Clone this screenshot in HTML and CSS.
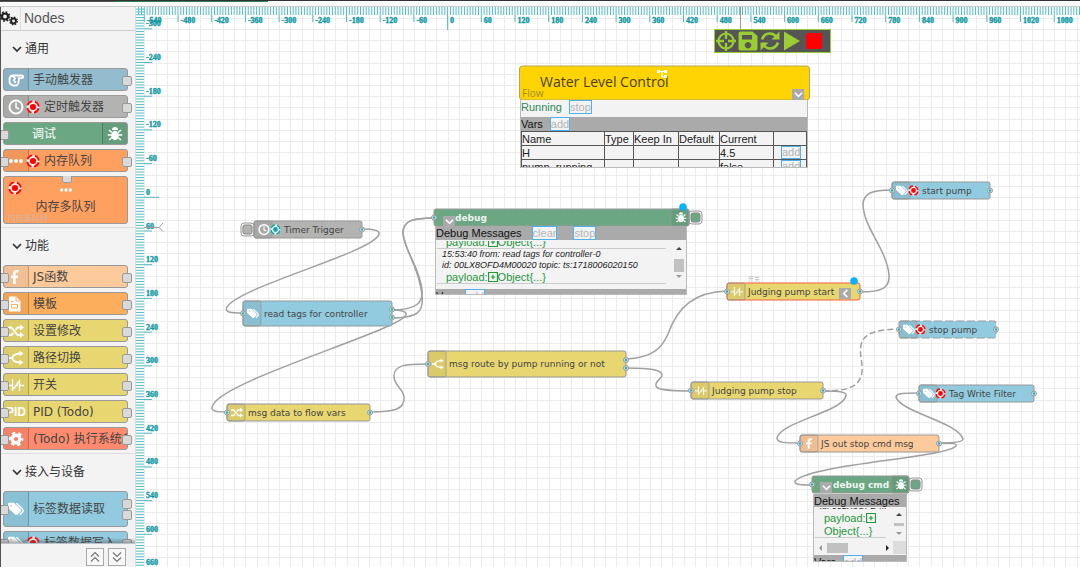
FILE: index.html
```html
<!DOCTYPE html>
<html lang="zh">
<head>
    <meta charset="UTF-8">
    <meta name="viewport" content="width=device-width, initial-scale=1.0">
    <title>Flow Editor</title>
    <link rel="stylesheet" href="styles.css">
</head>
<body>

    <svg class="defs" aria-hidden="true">
        <symbol id="i-cogs" viewBox="0 0 20 16">
            <circle cx="5" cy="5.5" r="3" fill="none" stroke="currentColor" stroke-width="2.2"/>
            <circle cx="5" cy="5.5" r="4.6" fill="none" stroke="currentColor" stroke-width="1.6" stroke-dasharray="1.8 1.81"/>
            <circle cx="13.5" cy="10" r="2.4" fill="none" stroke="currentColor" stroke-width="2"/>
            <circle cx="13.5" cy="10" r="3.8" fill="none" stroke="currentColor" stroke-width="1.4" stroke-dasharray="1.5 1.48"/>
        </symbol>
        <symbol id="i-hand" viewBox="0 0 16 16">
            <path d="M4.5 3.5h9.3a1.2 1.2 0 0 1 0 2.6H9.8M11 6.1v1.6q0 1-1 1.2M10.5 9v1.5q0 1-1 1.2M9.5 12q0 1.5-1.6 1.5H5.5Q1.500 13 1.5 8.5T4.5 3.5L7 6.500 5.5 9M6 9.500l2 1" fill="none" stroke="currentColor" stroke-width="1.9" stroke-linejoin="round"/>
        </symbol>
        <symbol id="i-clock" viewBox="0 0 16 16">
            <circle cx="8" cy="8" r="6.5" fill="none" stroke="currentColor" stroke-width="2"/>
            <path d="M8 3.500V8.500l3 1.5" fill="none" stroke="currentColor" stroke-width="1.5"/>
        </symbol>
        <symbol id="i-target" viewBox="0 0 16 16">
            <circle cx="8" cy="8" r="6.5" fill="#fff" fill-opacity=".8" stroke="#fff" stroke-opacity=".6" stroke-width="2"/>
            <circle cx="8" cy="8" r="6.5" fill="none" stroke="currentColor" stroke-width="2" stroke-dasharray="7.2 3.01" stroke-dashoffset="-1.5"/>
            <circle cx="8" cy="8" r="3.5" fill="currentColor"/>
        </symbol>
        <symbol id="i-bug" viewBox="0 0 16 16">
            <path d="M5 4a3 3 0 0 1 6 0z" fill="currentColor"/>
            <ellipse cx="8" cy="9.5" rx="3.8" ry="4.7" fill="currentColor"/>
            <path d="M2 4l3 2.5M14 4l-3 2.5M.8 9h4M15.2 9h-4M2 14l3-2.5M14 14l-3-2.5" stroke="currentColor" stroke-width="1.5"/>
        </symbol>
        <symbol id="i-dots" viewBox="0 0 16 16">
            <circle cx="3" cy="8" r="1.9" fill="currentColor"/>
            <circle cx="8" cy="8" r="1.9" fill="currentColor"/>
            <circle cx="13" cy="8" r="1.9" fill="currentColor"/>
        </symbol>
        <symbol id="i-func" viewBox="0 0 16 16">
            <path d="M10.500 2.300H8.500Q6.300 2.300 6.300 4.500V15M3 7.800h7" fill="none" stroke="currentColor" stroke-width="2.6"/>
        </symbol>
        <symbol id="i-file" viewBox="0 0 16 16">
            <path d="M1 .5h7L12.500 5V15.500H1z" fill="currentColor"/>
            <path d="M8 .5v4.500h4.500M3 5.500h2.500M3.500 8.500h6v3.500h-6z" fill="none" stroke="#fdae5c"/>
        </symbol>
        <symbol id="i-shuffle" viewBox="0 0 16 16">
            <path d="M0 4.500h3.500L9.500 12H13M0 12h3.500l1.800-2.200M7.600 6.800l1.900-2.300H13" fill="none" stroke="currentColor" stroke-width="2"/>
            <path d="M12 1.500l4 3-4 3zM12 9l4 3-4 3z" fill="currentColor"/>
        </symbol>
        <symbol id="i-route" viewBox="0 0 16 16">
            <path d="M0 8h4.500M13 3.500H11Q4.500 4.500 4.500 8T11 12.500h2" fill="none" stroke="currentColor" stroke-width="1.8"/>
            <path d="M11.500.8l4 2.700-4 2.700zM11.500 9.800l4 2.700-4 2.700z" fill="currentColor"/>
        </symbol>
        <symbol id="i-switch" viewBox="0 0 16 16">
            <path d="M0 8.500h4.500M4.500 2v12M5.500 12L12 3M11.500 4v10M11.500 8.500H16M8 8.500h2" fill="none" stroke="currentColor" stroke-width="1.3"/>
        </symbol>
        <symbol id="i-gear" viewBox="0 0 16 16">
            <circle cx="8" cy="8" r="3.8" fill="none" stroke="currentColor" stroke-width="3.4"/>
            <circle cx="8" cy="8" r="6.3" fill="none" stroke="currentColor" stroke-width="2.2" stroke-dasharray="3.3 3.3" stroke-dashoffset="1.6"/>
        </symbol>
        <symbol id="i-tags" viewBox="0 0 16 16">
            <path d="M0 3Q0 1.800 1.200 1.800H6L12.500 8.300Q13.500 9.500 12.500 10.500L9.500 13.600Q8.300 14.600 7.200 13.600L0 7z" fill="currentColor"/>
            <path d="M8.500 2.200L14.500 8.300Q15.700 9.600 14.500 10.900L11.800 13.800" fill="none" stroke="currentColor" stroke-width="1.5"/>
            <circle cx="3" cy="4.7" r=".8" fill="#8bb8c8"/>
        </symbol>
        <symbol id="i-caret" viewBox="0 0 10 10">
            <path d="M1 3l4 4 4-4" fill="none" stroke="currentColor" stroke-width="1.7"/>
        </symbol>
        <symbol id="i-up2" viewBox="0 0 12 12">
            <path d="M2 5.500l4-4 4 4M2 10.500l4-4 4 4" fill="none" stroke="currentColor" stroke-width="1.2"/>
        </symbol>
        <symbol id="i-down2" viewBox="0 0 12 12">
            <path d="M2 1.500l4 4 4-4M2 6.500l4 4 4-4" fill="none" stroke="currentColor" stroke-width="1.2"/>
        </symbol>
        <symbol id="i-crosshair" viewBox="0 0 20 20">
            <circle cx="10" cy="10" r="7.5" fill="none" stroke="currentColor" stroke-width="2.2"/>
            <path d="M10 0v8M10 12v8M0 10h8M12 10h8" stroke="currentColor" stroke-width="2.4"/>
        </symbol>
        <symbol id="i-save" viewBox="0 0 20 20">
            <path fill-rule="evenodd" d="M2.500.5h12L19.500 5v12.500q0 2-2 2h-15q-2 0-2-2v-15q0-2 2-2zM4 4v4.500h10V4zM10 11a3.200 3.200 0 1 0 .01 0z" fill="currentColor"/>
        </symbol>
        <symbol id="i-refresh" viewBox="0 0 20 20">
            <path d="M2 8.500Q4 2.500 10 2.500 13.500 2.500 16 5.500M18 11.500Q16 17.500 10 17.500 6.500 17.500 4 14.500" fill="none" stroke="currentColor" stroke-width="2.6"/>
            <path d="M19.500.5v8h-8zM.5 19.500v-8h8z" fill="currentColor"/>
        </symbol>
        <symbol id="i-play" viewBox="0 0 20 20">
            <path d="M2 .5L18 10 2 19.500z" fill="currentColor"/>
        </symbol>
        <symbol id="i-stop" viewBox="0 0 20 20">
            <rect x="2" y="2" width="16" height="16" rx="2" fill="red"/>
        </symbol>
        <symbol id="i-plus" viewBox="0 0 9 9">
            <path d="M.5.5h8v8h-8zM2.500 4.500h4M4.500 2.500v4" fill="none" stroke="currentColor"/>
        </symbol>
    </svg>

    <div class="topbar"><div class="tab-line"></div></div>

    <div class="editor">
        <aside class="sidebar">
            <header class="sidebar-head">
                <svg class="cogs"><use href="#i-cogs"/></svg>
                <h1>Nodes</h1>
            </header>

            <div class="palette">
                <section class="category">
                    <h2><svg><use href="#i-caret"/></svg>通用</h2>
                    <div class="pnode steel out">
                        <span class="picon"><svg><use href="#i-hand"/></svg></span>
                        <span class="plabel">手动触发器</span>
                    </div>
                    <div class="pnode gray out">
                        <span class="picon"><svg><use href="#i-clock"/></svg></span>
                        <svg class="mark"><use href="#i-target"/></svg>
                        <span class="plabel">定时触发器</span>
                    </div>
                    <div class="pnode green in">
                        <span class="plabel">调试</span>
                        <span class="picon at-end"><svg><use href="#i-bug"/></svg></span>
                    </div>
                    <div class="pnode orange in out">
                        <span class="picon"><svg><use href="#i-dots"/></svg></span>
                        <svg class="mark"><use href="#i-target"/></svg>
                        <span class="plabel">内存队列</span>
                    </div>
                    <div class="pnode orange multi">
                        <svg class="mark"><use href="#i-target"/></svg>
                        <svg class="dots"><use href="#i-dots"/></svg>
                        <span class="plabel">内存多队列</span>
                        <span class="type">内存多队列</span>
                    </div>
                </section>

                <section class="category">
                    <h2><svg><use href="#i-caret"/></svg>功能</h2>
                    <div class="pnode peach in out">
                        <span class="picon"><svg><use href="#i-func"/></svg></span>
                        <span class="plabel">JS函数</span>
                    </div>
                    <div class="pnode amber in out">
                        <span class="picon"><svg><use href="#i-file"/></svg></span>
                        <span class="plabel">模板</span>
                    </div>
                    <div class="pnode yellow in out">
                        <span class="picon"><svg><use href="#i-shuffle"/></svg></span>
                        <span class="plabel">设置修改</span>
                    </div>
                    <div class="pnode yellow in out">
                        <span class="picon"><svg><use href="#i-route"/></svg></span>
                        <span class="plabel">路径切换</span>
                    </div>
                    <div class="pnode yellow in out">
                        <span class="picon"><svg><use href="#i-switch"/></svg></span>
                        <span class="plabel">开关</span>
                    </div>
                    <div class="pnode yellow in out">
                        <span class="picon pid">PID</span>
                        <span class="plabel">PID (Todo)</span>
                    </div>
                    <div class="pnode red in out">
                        <span class="picon"><svg><use href="#i-gear"/></svg></span>
                        <span class="plabel">(Todo) 执行系统命令</span>
                    </div>
                </section>

                <section class="category">
                    <h2><svg><use href="#i-caret"/></svg>接入与设备</h2>
                    <div class="pnode sky tall in out2">
                        <span class="picon"><svg><use href="#i-tags"/></svg></span>
                        <span class="plabel">标签数据读取</span>
                    </div>
                    <div class="pnode sky in out">
                        <span class="picon"><svg><use href="#i-tags"/></svg></span>
                        <svg class="mark"><use href="#i-target"/></svg>
                        <span class="plabel">标签数据写入</span>
                    </div>
                </section>
            </div>

            <footer class="sidebar-foot">
                <button type="button" aria-label="Collapse all"><svg><use href="#i-up2"/></svg></button>
                <button type="button" aria-label="Expand all"><svg><use href="#i-down2"/></svg></button>
            </footer>
        </aside>

        <main class="workspace">
            <svg class="canvas" id="canvas">
                <g id="grid"></g>
                <g id="rulers"></g>
                <g id="wires"></g>
                <g id="nodes"></g>
            </svg>

            <div class="toolbar">
                <button type="button" aria-label="Center"><svg><use href="#i-crosshair"/></svg></button>
                <button type="button" aria-label="Save"><svg><use href="#i-save"/></svg></button>
                <button type="button" aria-label="Reload"><svg><use href="#i-refresh"/></svg></button>
                <button type="button" aria-label="Run"><svg><use href="#i-play"/></svg></button>
                <button type="button" aria-label="Stop"><svg><use href="#i-stop"/></svg></button>
            </div>

            <div class="panel flow-panel">
                <div class="status">Running <button type="button" class="link">stop</button></div>
                <div class="bar">Vars <button type="button" class="link">add</button></div>
                <table>
                    <tr><th class="c-name">Name</th><th class="c-type">Type</th><th class="c-keep">Keep In</th><th class="c-def">Default</th><th class="c-cur">Current</th><th></th></tr>
                    <tr><td>H</td><td></td><td></td><td></td><td>4.5</td><td class="act"><button type="button" class="link">add</button></td></tr>
                    <tr><td>pump_running</td><td></td><td></td><td></td><td>false</td><td class="act"><button type="button" class="link">add</button></td></tr>
                </table>
            </div>

            <div class="panel debug-panel">
                <div class="bar">Debug Messages <button type="button" class="link">clear</button> <button type="button" class="link far">stop</button></div>
                <div class="scroll">
                    <div class="messages">
                        <p class="payload">payload:<svg><use href="#i-plus"/></svg>Object{...}</p>
                        <p class="meta">15:53:40 from: read tags for controller-0</p>
                        <p class="meta">id: 00LX8OFD4M00020 topic: ts:1718006020150</p>
                        <p class="payload">payload:<svg><use href="#i-plus"/></svg>Object{...}</p>
                    </div>
                    <div class="vscroll"><i class="up"></i><i class="thumb"></i><i class="down"></i></div>
                </div>
                <div class="bar">Vars <button type="button" class="link">add</button></div>
            </div>

            <div class="panel cmd-panel">
                <div class="bar">Debug Messages</div>
                <div class="scroll">
                    <div class="messages">
                        <p class="meta">id: 00LX8OFD4M0002</p>
                        <p class="payload">payload:<svg><use href="#i-plus"/></svg><br>Object{...}</p>
                    </div>
                    <div class="vscroll"><i class="up"></i><i class="thumb"></i><i class="down"></i></div>
                </div>
                <div class="hscroll"><i class="left"></i><i class="thumb"></i><i class="right"></i></div>
                <div class="bar">Vars <button type="button" class="link">add</button></div>
            </div>

            <button type="button" class="fold fold-flow" aria-label="Fold flow"><svg><use href="#i-caret"/></svg></button>
            <button type="button" class="fold fold-debug" aria-label="Fold debug"><svg><use href="#i-caret"/></svg></button>
            <button type="button" class="fold fold-cmd" aria-label="Fold debug cmd"><svg><use href="#i-caret"/></svg></button>
            <button type="button" class="fold fold-judge" aria-label="Unfold judging"><svg><use href="#i-caret"/></svg></button>
        </main>
    </div>

    <script src="script.js"></script>
</body>
</html>
```

FILE: styles.css
```css
* {
    box-sizing: border-box;
}
body {
    margin: 0;
    height: 100vh;
    display: flex;
    flex-direction: column;
    overflow: hidden;
    background: #fff;
    font-family: "Liberation Sans", "Noto Sans CJK SC", sans-serif;
    font-size: 11px;
    color: #222;
}
h1, h2, p {
    margin: 0;
    font-weight: normal;
}
button {
    font: inherit;
    padding: 0;
    cursor: pointer;
}
svg {
    display: block;
    flex: none;
}
.defs {
    position: absolute;
    width: 0;
    height: 0;
}
.topbar {
    height: 7px;
    flex: none;
    border-top: 1px solid #333;
    border-bottom: 1px solid #ccc;
    background: #fafafa;
}
.tab-line {
    width: 268px;
    height: 1px;
    background: linear-gradient(90deg, #555 115px, #2f7d55 115px);
}
.editor {
    flex: 1;
    min-height: 0;
    display: flex;
}

/* palette */
.sidebar {
    width: 136px;
    flex: none;
    display: flex;
    flex-direction: column;
    background: #f3f3f3;
    border-left: 1px solid #555;
    border-right: 1px solid #ddd;
}
.sidebar-head {
    height: 24px;
    flex: none;
    display: flex;
    align-items: center;
    border-bottom: 1px solid #ccc;
}
.cogs {
    width: 20px;
    height: 16px;
    margin-left: -1px;
    color: #222;
}
.sidebar-head h1 {
    font-size: 14px;
    line-height: 23px;
    padding-left: 3px;
    border-left: 1px solid #ddd;
    color: #555;
}
.palette {
    flex: 1;
    min-height: 0;
    overflow: hidden;
    position: relative;
}
/* fade at the lower edge of the scrolled list */
.palette::after {
    content: "";
    position: absolute;
    left: 0;
    right: 0;
    bottom: 0;
    height: 5px;
    background: linear-gradient(rgba(90, 90, 90, 0), rgba(90, 90, 90, .5));
}
.category {
    display: flex;
    flex-direction: column;
    gap: 5px;
    padding: 0 7px 4px 2px;
    border-bottom: 1px solid #ddd;
}
.category h2 {
    height: 36px;
    margin-bottom: -4px;
    padding-left: 9px;
    display: flex;
    align-items: center;
    gap: 3px;
    font-size: 12px;
    line-height: 36px;
    color: #333;
}
.category h2 svg {
    width: 10px;
    height: 10px;
}
.pnode {
    position: relative;
    height: 23px;
    margin-bottom: -1px;
    display: flex;
    align-items: center;
    border: 1px solid #999;
    border-radius: 3px;
    white-space: nowrap;
    font-family: "DejaVu Sans", "Noto Sans CJK SC", sans-serif;
    font-size: 12px;
    color: #444;
}
.picon {
    width: 25px;
    align-self: stretch;
    flex: none;
    display: flex;
    align-items: center;
    justify-content: center;
    background: rgba(0, 0, 0, .05);
    border-right: 1px solid rgba(0, 0, 0, .2);
    color: #fff;
}
.picon svg {
    width: 16px;
    height: 16px;
}
.picon.at-end {
    border-right: 0;
    border-left: 1px solid rgba(0, 0, 0, .2);
}
.pid {
    font-size: 12px;
    font-weight: bold;
    font-family: "Liberation Sans", sans-serif;
}
.mark {
    width: 14px;
    height: 14px;
    margin: 0 0 0 -3px;
    color: red;
}
.plabel {
    flex: 1;
    min-width: 0;
    overflow: hidden;
    padding-left: 4px;
    line-height: 20px;
}
.green .plabel {
    padding-left: 28px;
    color: #fff;
}
.steel { background: #93bccf; }
.gray { background: #b3b3b1; }
.green { background: #6ba783; }
.orange { background: #ffa060; }
.peach { background: #fdca9c; }
.amber { background: #fdae5c; }
.yellow { background: #e8d770; }
.red { background: #ff8a6e; }
.sky { background: #92cbdf; }
.tall {
    height: 36px;
}
.multi {
    height: 48px;
    display: block;
    text-align: center;
}
.multi .plabel {
    display: block;
    padding: 0;
}
.multi .mark {
    position: absolute;
    left: 7px;
    top: 4px;
}
.dots {
    width: 14px;
    height: 14px;
    margin: 6px auto 0;
    color: #fff;
}
.type {
    position: absolute;
    left: 4px;
    bottom: 0;
    font-size: 8px;
    line-height: 8px;
    color: #cdb8a8;
}
.in::before, .out::after, .out2::after, .multi::before {
    content: "";
    position: absolute;
    width: 8px;
    height: 8px;
    top: 7px;
    background: #d9d9d9;
    border: 1px solid #999;
    border-radius: 2px;
}
.in::before {
    left: -5px;
}
.out::after, .out2::after {
    right: -5px;
}
.tall::before {
    top: 13px;
}
.out2::after {
    top: 7px;
    box-shadow: 0 11px 0 -1px #d9d9d9, 0 11px 0 0 #999;
}
.multi::before {
    left: 58px;
    top: -4px;
    clip-path: inset(3px 0 0 0);
}
.sidebar-foot {
    height: 24px;
    flex: none;
    display: flex;
    gap: 4px;
    justify-content: flex-end;
    align-items: flex-end;
    padding: 0 9px 1px 0;
    border-top: 1px solid #b8c4cc;
}
.sidebar-foot button {
    width: 18px;
    height: 18px;
    display: grid;
    place-items: center;
    background: #f8f8f8;
    border: 1px solid #aaa;
    color: #777;
}
.sidebar-foot svg {
    width: 12px;
    height: 12px;
}

/* canvas */
.workspace {
    position: relative;
    flex: 1;
    min-width: 0;
    overflow: hidden;
}
.canvas {
    width: 100%;
    height: 100%;
}
.grid-line {
    stroke: #ececec;
}
.tick {
    stroke: #52bcc6;
}
.ruler-label {
    font: bold 8px "Liberation Serif", serif;
    fill: #129aa5;
    stroke: #129aa5;
    stroke-width: .4;
}
.cursor {
    stroke: #999;
    fill: none;
}
.wire {
    fill: none;
    stroke: #a0a0a0;
    stroke-width: 1.5;
}
.dashed {
    stroke-dasharray: 6 3;
}
.node-box {
    stroke: #999;
}
.node-box.dashed {
    stroke-dasharray: 8 3;
}
.node-box.selected {
    stroke: #ff5f3c;
}
.icon-box {
    fill: #000;
    fill-opacity: .06;
    stroke: #999;
    stroke-opacity: .8;
}
.node-icon {
    color: #fff;
}
.mark-red { color: red; }
.mark-teal { color: #12a5b0; }
.node-label {
    font-family: "DejaVu Sans", sans-serif;
    font-size: 9px;
    fill: #444;
}
.node-label.light {
    font-weight: bold;
    fill: #eef6f0;
}
.flow-title {
    font-family: "Open Sans", sans-serif;
    font-size: 14px;
    fill: #4a3f10;
}
.flow-type {
    font-family: "Open Sans", sans-serif;
    font-size: 10px;
    fill: #a08a30;
}
.hint {
    font-family: "Noto Sans CJK SC", sans-serif;
    font-size: 6px;
    fill: #bbb;
}
.port {
    fill: #d5e6e8;
    stroke: #999;
}
.port-dot {
    fill: #2fa9b4;
}
.changed {
    fill: #00b7ff;
    stroke: #0a9ad8;
    stroke-width: .5;
}

.toolbar {
    position: absolute;
    left: 578px;
    top: 22px;
    height: 24px;
    padding: 0 6px 0 1px;
    display: flex;
    align-items: center;
    gap: 2px;
    background: #555;
    border: 1px solid #9acd32;
}
.toolbar button {
    border: 0;
    background: none;
    color: #9acd32;
}
.toolbar svg {
    width: 20px;
    height: 20px;
}

/* panels under the nodes */
.panel {
    position: absolute;
    overflow: hidden;
    background: #f3f3f3;
    border: 1px solid #bbb;
    border-top: 0;
}
.flow-panel {
    left: 384px;
    top: 93px;
    width: 288px;
    height: 68px;
}
.debug-panel {
    left: 299px;
    top: 219px;
    width: 252px;
    height: 69px;
}
.cmd-panel {
    left: 677px;
    top: 487px;
    width: 94px;
    height: 68px;
}
.status, .bar {
    display: flex;
    align-items: center;
    gap: 7px;
    white-space: nowrap;
}
.status {
    height: 14px;
    margin-bottom: 3px;
    color: #2e8b57;
}
.bar {
    height: 14px;
    background: #aaa;
    color: #111;
}
.debug-panel .bar:first-child {
    gap: 10px;
}
.debug-panel .far {
    margin-left: 6px;
}
.link {
    border: 1px solid #4db2ea;
    background: #f3f3f3;
    color: #b5b5b5;
    line-height: 12px;
}
table {
    width: 100%;
    table-layout: fixed;
    border-collapse: collapse;
    font-size: 11px;
}
th, td {
    height: 14px;
    padding: 0;
    border: 1px solid #555;
    font-weight: normal;
    text-align: left;
    line-height: 12px;
    white-space: nowrap;
}
.c-name { width: 83px; }
.c-type { width: 29px; }
.c-keep { width: 45px; }
.c-def { width: 41px; }
.c-cur { width: 54px; }
.act {
    padding-left: 7px;
}
.act .link {
    display: block;
    line-height: 11px;
}
.scroll {
    height: 48px;
    margin-top: 1px;
    padding: 0 2px 0 1px;
    display: flex;
    gap: 7px;
}
.messages {
    flex: 1;
    overflow: hidden;
    display: flex;
    flex-direction: column;
    justify-content: flex-end;
    padding-bottom: 5px;
    white-space: nowrap;
}
.meta {
    flex: none;
    padding-left: 5px;
    font-size: 9px;
    font-style: italic;
    line-height: 11px;
}
.payload {
    flex: none;
    height: 13px;
    padding-left: 9px;
    line-height: 12px;
    color: #24963c;
    border-bottom: 1px solid #ccc;
}
.payload svg {
    display: inline-block;
    width: 10px;
    height: 10px;
    vertical-align: -1px;
}
.vscroll {
    width: 11px;
    flex: none;
    display: flex;
    flex-direction: column;
    align-items: center;
    justify-content: space-between;
    padding: 6px 0 11px;
}
.vscroll .thumb {
    width: 10px;
    height: 13px;
    margin-top: 5px;
    background: #c1c1c1;
}
.vscroll .up, .vscroll .down {
    border: 3px solid transparent;
}
.vscroll .up {
    border-top: 0;
    border-bottom-color: #444;
}
.vscroll .down {
    border-bottom: 0;
    border-top-color: #999;
}
.cmd-panel .bar {
    height: 13px;
}
.cmd-panel .scroll {
    height: 33px;
}
.cmd-panel .messages {
    padding-bottom: 3px;
}
.cmd-panel .payload {
    height: 26px;
    line-height: 13px;
}
.cmd-panel .meta {
    height: 11px;
}
.cmd-panel .vscroll {
    padding: 5px 0 6px;
}
.cmd-panel .vscroll .thumb {
    height: 3px;
    margin: 0;
}
.hscroll {
    height: 13px;
    margin-bottom: 1px;
    padding-left: 5px;
    display: flex;
    align-items: center;
    border-right: 13px solid #ddd;
}
.hscroll .thumb {
    width: 21px;
    height: 10px;
    margin: 0 auto 0 5px;
    background: #c1c1c1;
}
.hscroll .left, .hscroll .right {
    border: 3px solid transparent;
}
.hscroll .left {
    border-left: 0;
    border-right-color: #999;
}
.hscroll .right {
    margin-right: 4px;
    border-right: 0;
    border-left-color: #222;
}
.fold {
    position: absolute;
    width: 12px;
    height: 11px;
    display: grid;
    place-items: center;
    border: 0;
    background: #aaa;
    color: #fff;
}
.fold svg {
    width: 9px;
    height: 9px;
}
.fold-flow { left: 656px; top: 82px; }
.fold-debug { left: 307px; top: 209px; }
.fold-cmd { left: 684px; top: 475px; }
.fold-judge { left: 703px; top: 281px; }
.fold-judge svg { transform: rotate(90deg); }
```

FILE: script.js
```js
// canvas coordinates are window coordinates, the workspace starts at OX, OY
const OX = 136, OY = 7;
const ZERO_X = 447.6, ZERO_Y = 197.3; // where the rulers read 0
const STEP = 33.7;                     // pixels per 60 units
const NS = 'http://www.w3.org/2000/svg';

function add(parent, tag, attrs, text) {
    const el = document.createElementNS(NS, tag);
    for (const k in attrs) el.setAttribute(k, attrs[k]);
    if (text) el.textContent = text;
    parent.appendChild(el);
    return el;
}

const layer = {};
for (const id of ['grid', 'rulers', 'wires', 'nodes']) {
    layer[id] = document.getElementById(id);
    layer[id].setAttribute('transform', `translate(${-OX} ${-OY})`);
}

function line(parent, cls, x1, y1, x2, y2) {
    add(parent, 'line', { class: cls, x1, y1, x2, y2 });
}

function drawGrid() {
    const w = window.innerWidth, h = window.innerHeight;
    for (let i = -27; ZERO_X + i * STEP / 3 < w; i++) {
        const x = Math.round(ZERO_X + i * STEP / 3) + 0.5;
        line(layer.grid, 'grid-line', x, 16, x, h);
    }
    for (let i = -16; ZERO_Y + i * STEP / 3 < h; i++) {
        const y = Math.round(ZERO_Y + i * STEP / 3) + 0.5;
        line(layer.grid, 'grid-line', 144, y, w, y);
    }
}

function drawRulers() {
    const w = window.innerWidth, h = window.innerHeight, r = layer.rulers;
    for (let i = -110; ZERO_X + i * STEP / 12 < w; i++) {
        const x = ZERO_X + i * STEP / 12;
        if (x < OX) continue;
        const major = i % 12 === 0;
        line(r, 'tick', x, 7, x, i === 0 ? 30 : major ? 22 : 15);
        if (major) add(r, 'text', { class: 'ruler-label', x: x + 2.5, y: 22.5 }, String(i * 5));
    }
    for (let i = -67; ZERO_Y + i * STEP / 12 < h; i++) {
        const y = ZERO_Y + i * STEP / 12;
        const major = i % 12 === 0;
        line(r, 'tick', OX, y, i === 0 ? 159 : major && y > 20 ? 152 : 144, y);
        if (major && y > 20) add(r, 'text', { class: 'ruler-label', x: 146, y: y - 2.5 }, String(i * 5));
    }
    add(r, 'text', { class: 'ruler-label', x: 146, y: 565 }, '660');
    add(r, 'path', { class: 'cursor', d: 'M740.5 7V29M144 227.5H159M163 223L159 227.5L163 231.5' });
}

const wires = [
    'M362 229C375 229 380 231 379 234C375 252 240 286 227 307C224 313 232 313 243 313',
    'M391 310C418 310 423 302 422 290C420 268 404 250 403 233C403 220 414 218 434 218',
    'M391 318C418 318 424 312 422 295C419 266 404 250 403 233C403 220 414 218 434 218',
    'M391 310C400 310 407 311 406 315C400 330 224 380 213 405C209 412 218 412 227 412',
    'M370 412C395 412 405 409 404 397C403 388 394 386 394 376C394 365 405 364 428 364',
    'M626 359C652 358 662 348 668 334C678 306 695 292 727 291',
    'M626 368C652 368 663 370 662 376C660 380 655 381 656 386C657 390 668 391 692 391',
    'M860 292C882 292 890 288 889 275C887 250 864 228 863 205C863 193 872 190 892 190',
    'M823 391C840 391 847 392 846 396C842 412 780 422 777 438C777 443 785 443 800 443',
    'M940 443C955 443 963 442 963 439C958 422 900 412 896 397C896 393 905 393 919 393',
    'M940 443C952 443 957 443 956 446C945 458 812 464 795 481C794 485 802 485 812 485'
];

const nodes = [
    { x: 254, y: 221, w: 108, h: 17, fill: '#b3b3b1', icon: 'clock', mark: 'teal', label: 'Timer Trigger', in: 0, out: 1, button: 'left' },
    { x: 243, y: 301, w: 149, h: 25, fill: '#92cbdf', icon: 'tags', label: 'read tags for controller', in: 1, out: 2 },
    { x: 227, y: 404, w: 143, h: 17, fill: '#e8d770', icon: 'shuffle', label: 'msg data to flow vars', in: 1, out: 1 },
    { x: 428, y: 351, w: 198, h: 26, fill: '#e8d770', icon: 'route', label: 'msg route by pump running or not', in: 1, out: 2 },
    { x: 727, y: 283, w: 133, h: 17, fill: '#e8d770', icon: 'switch', label: 'Judging pump start', in: 1, out: 1, state: 'selected', changed: 1 },
    { x: 691, y: 382, w: 132, h: 17, fill: '#e8d770', icon: 'switch', label: 'Judging pump stop', in: 1, out: 1 },
    { x: 892, y: 182, w: 98, h: 17, fill: '#92cbdf', icon: 'tags', mark: 'red', label: 'start pump', in: 1, out: 1 },
    { x: 899, y: 321, w: 97, h: 17, fill: '#92cbdf', icon: 'tags', mark: 'red', label: 'stop pump', in: 1, out: 1, state: 'dashed' },
    { x: 919, y: 385, w: 115, h: 17, fill: '#92cbdf', icon: 'tags', mark: 'red', label: 'Tag Write Filter', in: 1, out: 1 },
    { x: 800, y: 435, w: 139, h: 17, fill: '#fdca9c', icon: 'func', label: 'JS out stop cmd msg', in: 1, out: 1 },
    { x: 434, y: 209, w: 255, h: 17, fill: '#6ba783', icon: 'bug', label: 'debug', in: 1, out: 0, button: 'right', changed: 1 },
    { x: 812, y: 476, w: 97, h: 17, fill: '#6ba783', icon: 'bug', label: 'debug cmd', in: 1, out: 0, button: 'right' }
];

function use(parent, icon, cls, x, y, size) {
    add(parent, 'use', { href: '#i-' + icon, class: cls, x, y, width: size, height: size });
}

function drawPort(x, y) {
    add(layer.nodes, 'circle', { class: 'port', cx: x, cy: y, r: 2.5 });
    add(layer.nodes, 'circle', { class: 'port-dot', cx: x, cy: y, r: 1.2 });
}

function drawNode(n) {
    const g = layer.nodes, mid = n.y + n.h / 2;
    const right = n.icon === 'bug';
    if (n.button) {
        const bx = n.button === 'left' ? n.x - 13 : n.x + n.w;
        add(g, 'rect', { x: bx, y: mid - 6.5, width: 13, height: 13, rx: 3, fill: '#f3f3f3', stroke: '#999' });
        add(g, 'rect', { x: bx + 2, y: mid - 4.5, width: 9, height: 9, rx: 2, fill: n.fill, stroke: '#888' });
    }
    add(g, 'rect', { class: 'node-box ' + (n.state || ''), x: n.x, y: n.y, width: n.w, height: n.h, rx: 2, fill: n.fill });
    const ix = right ? n.x + n.w - 18 : n.x;
    add(g, 'rect', { class: 'icon-box', x: ix, y: n.y, width: 18, height: n.h, rx: 2 });
    use(g, n.icon, 'node-icon', ix + 4, mid - 6, 12);
    if (n.mark) use(g, 'target', 'mark-' + n.mark, n.x + 16, mid - 5.5, 11);
    const tx = n.x + (n.mark ? 30 : 21);
    add(g, 'text', { class: 'node-label' + (right ? ' light' : ''), x: tx, y: mid + 3 }, n.label);
    if (n.in) drawPort(n.x, mid);
    if (n.out === 1) drawPort(n.x + n.w, mid);
    if (n.out === 2) {
        drawPort(n.x + n.w, mid - 4);
        drawPort(n.x + n.w, mid + 4);
    }
    if (n.changed) add(g, 'circle', { class: 'changed', cx: n.x + n.w - 6, cy: n.y - 2, r: 3.5 });
}

function drawFlow() {
    const g = layer.nodes;
    add(g, 'rect', { x: 519.5, y: 66, width: 290, height: 34, rx: 3, fill: '#ffd400', stroke: '#b5a565' });
    add(g, 'text', { class: 'flow-title', x: 540, y: 86.5 }, 'Water Level Control');
    add(g, 'text', { class: 'flow-type', x: 522, y: 97 }, 'Flow');
    add(g, 'path', { d: 'M657 71.5h10M662 72v5h5', fill: 'none', stroke: '#fff', 'stroke-width': 1.2 });
    add(g, 'path', { d: 'M657 70h3v3h-3zM664 70h3v3h-3zM664 75h3v3h-3z', fill: '#fff' });
    add(g, 'text', { class: 'hint', x: 748, y: 281 }, '开关');
}

drawGrid();
drawRulers();
wires.forEach(d => add(layer.wires, 'path', { class: 'wire', d }));
add(layer.wires, 'path', { class: 'wire dashed', d: 'M823 391C850 391 860 386 862 372C863 362 859 355 861 345C864 331 880 330 899 329' });
nodes.forEach(drawNode);
drawFlow();
```
